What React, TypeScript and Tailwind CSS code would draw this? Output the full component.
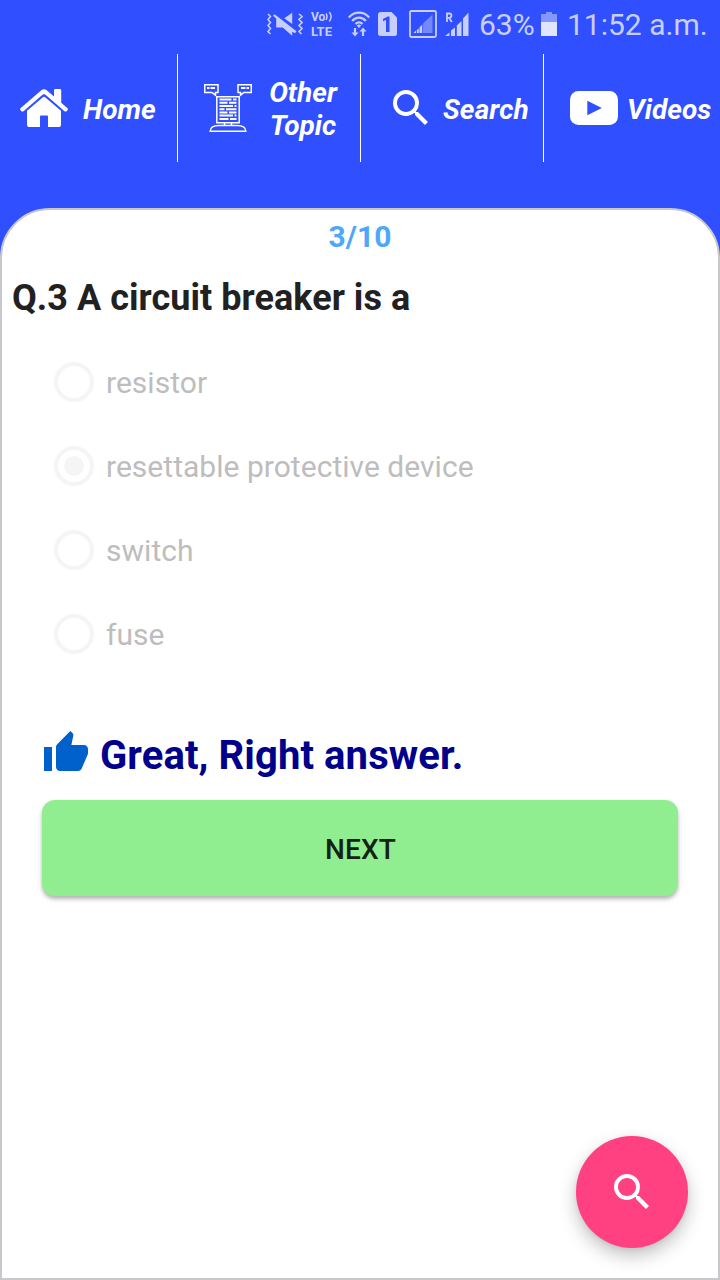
import { useState } from 'react';

const SearchIcon = () => (
  <svg viewBox="0 0 24 24" className="size-12 shrink-0" fill="#fff">
    <path d="M15.5 14h-.79l-.28-.27A6.471 6.471 0 0 0 16 9.5 6.5 6.5 0 1 0 9.5 16c1.61 0 3.09-.59 4.23-1.57l.27.28v.79l5 4.99L20.49 19l-4.99-5zm-6 0C7.01 14 5 11.99 5 9.5S7.01 5 9.5 5 14 7.01 14 9.5 11.99 14 9.5 14z" />
  </svg>
);

const HomeIcon = () => (
  <svg viewBox="0 0 48 38" className="h-[38px] w-12 shrink-0" fill="#fff">
    <path d="M0.5 19.2 21.6 1.1Q24 -0.8 26.4 1.1L34 7.6V1.2Q34 0 35.2 0H40Q41.2 0 41.2 1.2V13.8L47.5 19.2Q48.4 20.4 47.3 21.4L46.5 22.2Q45.4 22.8 44.2 21.9L25.2 5.6Q24 4.7 22.8 5.6L3.8 21.9Q2.6 22.8 1.5 22.2L0.7 21.4Q-0.4 20.4 0.5 19.2Z" />
    <path d="M7 21.8 22.9 8.2Q24 7.3 25.1 8.2L41 21.8V36Q41 38 39 38H28V27.5Q28 26.5 27 26.5H21Q20 26.5 20 27.5V38H9Q7 38 7 36Z" />
  </svg>
);

const TopicIcon = () => (
  <svg viewBox="0 0 48 48" className="size-12 shrink-0" fill="none" stroke="#fff" strokeWidth="1.5">
    <path d="M.7 .7H14V8.5H11.5V11.2L7.8 8.5H.7ZM34 .7H47.3V8.5H40L36.5 11.2V8.5H34Z" />
    <path d="M3 4h2.5M6.5 4h4.5M37 4h4.5M42.5 4H45" strokeWidth="2" />
    <path d="M12.8 12.7H35.2V38.7H12.8Z" />
    <path d="M15.5 15.5H27.5M29 15.5h3.5M15.5 18.8h8M25 18.8H32.5M15.5 22H29M30.5 22h2M15.5 25.2h5M22 25.2H32.5M15.5 28.4h8M25 28.4H32.5M15.5 31.6h13.5M30.5 31.6h2M15.5 35h9M26 35H32.5" strokeWidth="2" />
    <path d="M20.5 39V41.5H15C9 41.5 6.2 43.5 6.2 47.3H41.8C41.8 43.5 39 41.5 33 41.5H27.5V39M20.5 41.5H27.5" />
  </svg>
);

const VideoIcon = () => (
  <svg viewBox="0 0 48 34" className="h-[34px] w-12 shrink-0">
    <rect width="48" height="34" rx="8.5" fill="#fff" />
    <path d="M17.3 9.8 31.8 17 17.3 24.3Z" fill="#304ffe" />
  </svg>
);

const StatusBar = () => (
  <div className="flex h-12 items-center pl-[267px] text-[30px] text-[#c8cfff]">
    {/* sound off, vibrating */}
    <svg viewBox="0 0 36 24" className="h-6 w-9 shrink-0" fill="none" stroke="currentColor" strokeWidth="1.6">
      <path d="M1 2 3.5 4.5 1 7.5 3.5 10.5 1 13.5 3.5 16.5 1 19.5 3.5 22M32 2 35 4.5 32 7.5 35 10.5 32 13.5 35 16.5 32 19.5 34.5 22" />
      <path d="M25.2 .7V12L17.3 6.3ZM6 3.8 7.6 2.2 29.5 19.3 28 21.3 25.2 19.8V23.8L15.7 15.5H9.2V6.5Z" fill="currentColor" stroke="none" />
    </svg>
    <div className="ml-2 flex w-[25px] shrink-0 flex-col font-bold">
      <div className="flex h-[12px] items-center">
        <span className="text-[12px] leading-[12px]">Vo</span>
        <svg viewBox="0 0 8 11" className="h-[11px] w-2 shrink-0" fill="none" stroke="currentColor" strokeWidth="1.5">
          <path d="M1 2.5Q3 5.5 1 9M4.3 1Q7.8 5.5 4.3 10.5" />
        </svg>
      </div>
      <span className="mt-0.5 text-[13px] leading-[13px]">LTE</span>
    </div>
    <svg viewBox="0 0 22 26" className="ml-3 h-[26px] w-[22px] shrink-0" fill="none" stroke="currentColor" strokeWidth="2.2">
      <path d="M.8 6.5C6.5 .1 15.5 .1 21.2 6.5M4.2 10C8 5.6 14 5.6 17.8 10M7.5 13C9.5 10.8 12.5 10.8 14.5 13" />
      <path d="M8.7 14.5a3.4 3.4 0 0 1 4.6 0L11 17Z" fill="currentColor" stroke="none" />
      <path d="M7 17V23M15 25V19" />
      <path d="M3.5 21.5H10.5L7 25.5ZM11.5 20.5H18.5L15 16.5Z" fill="currentColor" stroke="none" />
    </svg>
    <svg viewBox="0 0 19 24" className="ml-2 h-6 w-[19px] shrink-0">
      <path d="M2.5 0H13.5L19 5.5V21.5Q19 24 16.5 24H2.5Q0 24 0 21.5V2.5Q0 0 2.5 0Z" fill="currentColor" />
      <path d="M5 7 9.8 4.5H11.5V20H8V8L5 9.3Z" fill="#304ffe" />
    </svg>
    <svg viewBox="0 0 28 28" className="ml-3 size-7 shrink-0">
      <rect x="1" y="1" width="26" height="26" rx="1.5" fill="none" stroke="currentColor" strokeWidth="1.8" />
      <path d="M14 13.5 23.5 4.5V23H14Z" fill="#7488ff" />
      <path d="M4.5 23H7V20.5ZM7.8 20 9.8 18.5V23H7.8ZM10.5 17.5 13.2 14.5V23H10.5Z" fill="currentColor" />
    </svg>
    <svg viewBox="0 0 25 26" className="ml-2 h-[26px] w-[25px] shrink-0" fill="currentColor">
      <path d="M0 25H4.5V21.5ZM6 19.5 10 16.5V25H6ZM11.8 14.5 16.5 10V25H11.8ZM18 7.5 23.5 1.5V25H18Z" />
      <path d="M2 11V2.5H4.4Q6.4 2.5 6.4 4.6T4.4 6.8H2M4.2 7 6.8 11" fill="none" stroke="currentColor" strokeWidth="1.8" />
    </svg>
    <span className="ml-[9px] w-[60px]">63%</span>
    <svg viewBox="0 0 16 24" className="ml-0.5 h-6 w-4 shrink-0">
      <path d="M0 2H5V0H11V2H16V10H0Z" fill="#8496ff" />
      <path d="M0 10H16V24H0Z" fill="#e0e4ff" />
    </svg>
    <span className="ml-[10px] whitespace-nowrap">11:52 a.m.</span>
  </div>
);

const NavBar = () => (
  <nav className="mt-1.5 flex h-[108px] items-center text-[28px] leading-[33px] font-bold text-white italic">
    <a className="flex h-full w-[178px] items-center border-r border-white pl-5">
      <HomeIcon />
      <span className="mt-0.5 ml-[15px]">Home</span>
    </a>
    <a className="flex h-full w-[183px] items-center border-r border-white pl-[26px]">
      <TopicIcon />
      <span className="mt-0.5 ml-4 w-[70px] text-center">Other Topic</span>
    </a>
    <a className="flex h-full w-[183px] items-center border-r border-white pl-[26px]">
      <SearchIcon />
      <span className="mt-0.5 ml-2 tracking-[0.15px]">Search</span>
    </a>
    <a className="flex h-full w-[176px] items-center pl-[26px]">
      <VideoIcon />
      <span className="mt-0.5 ml-[9px]">Videos</span>
    </a>
  </nav>
);

const options = ['resistor', 'resettable protective device', 'switch', 'fuse'];

const App = () => {
  const [selected] = useState(1);

  return (
    <div className="relative flex h-[1280px] w-[720px] flex-col overflow-hidden bg-[linear-gradient(#304ffe_0_280px,#fff_280px)] font-[Roboto,sans-serif]">
      <StatusBar />
      <NavBar />

      <main className="mt-[46px] flex flex-1 flex-col rounded-t-[50px] border-2 border-[#c8c8cc] bg-white">
        <p className="mt-[9px] text-center text-[30px] leading-9 font-bold text-[#50a7f9]">3/10</p>
        <h1 className="mt-[22px] ml-[10px] text-[36px] leading-[42px] font-bold tracking-[0.04px] text-[#212121]">Q.3 A circuit breaker is a</h1>

        <ul className="mt-[21px] ml-[52px]">
          {options.map((option, index) => (
            <li key={option} className="flex h-[84px] items-center text-[30px] tracking-[0.03px] text-[#bdbdbd]">
              <span className="mr-3 flex size-10 items-center justify-center rounded-full border-4 border-[#f5f5f5]">
                {selected === index && <span className="size-5 rounded-full bg-[#f5f5f5]" />}
              </span>
              {option}
            </li>
          ))}
        </ul>

        <div className="mt-[53px] ml-10 flex h-12 items-center">
          <svg viewBox="0 0 24 24" className="size-12 shrink-0" fill="#0060cc">
            <path d="M1 21h4V9H1v12zm22-11c0-1.1-.9-2-2-2h-6.31l.95-4.57.03-.32c0-.41-.17-.79-.44-1.06L14.17 1 7.59 7.59C7.22 7.95 7 8.45 7 9v10c0 1.1.9 2 2 2h9c.83 0 1.54-.5 1.84-1.22l3.02-7.05c.09-.23.14-.47.14-.73v-2z" />
          </svg>
          <span className="mt-1.5 ml-[10px] text-[40px] leading-[48px] font-bold tracking-[0.1px] text-[#00008b]">Great, Right answer.</span>
        </div>

        <button className="mx-10 mt-[23px] h-24 rounded-[13px] bg-[#90ee90] pt-1 pl-px text-[28px] font-medium tracking-[0.2px] text-[#152315] shadow-[0_3px_4px_rgba(0,0,0,0.3)]">
          NEXT
        </button>
      </main>

      <button className="absolute right-8 bottom-8 flex size-28 items-center justify-center rounded-full bg-[#ff4081] shadow-[0_8px_18px_rgba(0,0,0,0.24),0_1px_4px_rgba(0,0,0,0.08)]">
        <SearchIcon />
      </button>
    </div>
  );
};

export default App;
